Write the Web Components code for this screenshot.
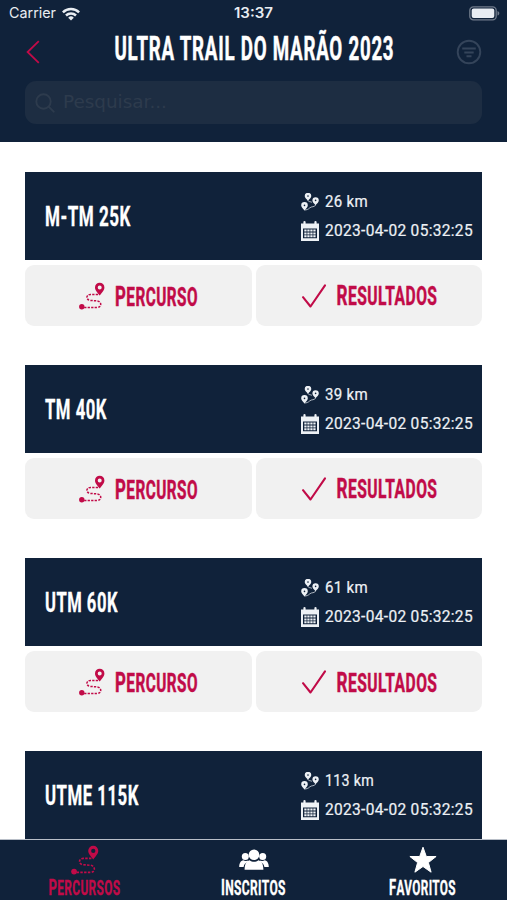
<!DOCTYPE html>
<html lang="pt">
<head>
<meta charset="utf-8">
<meta name="viewport" content="width=device-width, initial-scale=1">
<title>Ultra Trail do Marão 2023</title>
<style>
	html, body {
		margin: 0;
		height: 100%;
		overflow: hidden;
		background: #fff;
	}
	body {
		--navy: #10223a;
		--red: #c10b48;
		font-family: Roboto, "Liberation Sans", sans-serif;
		color: #fff;
	}
</style>
</head>
<body>
<race-app></race-app>
<script>
const ICONS = {
	route: `<svg viewBox="0 0 26 28"><path fill="currentColor" fill-rule="evenodd" d="M20.700 13.600C19 10.900 16 8.600 16 5.400a4.700 4.700 0 0 1 9.400 0c0 3.200-3 5.500-4.700 8.200zM20.700 3.500a2 2 0 1 0 0 4 2 2 0 0 0 0-4z"/><path fill="none" stroke="currentColor" stroke-width="1.500" stroke-dasharray="2.300 1.200" d="M19 12.500h-7.500c-4.800 0-4.800 5.600 0 5.900l6.500.5c5 .5 5 6.600 0 6.600H4"/><circle cx="2.800" cy="24.800" r="2.700" fill="currentColor"/></svg>`,
	check: `<svg viewBox="0 0 26 26"><path fill="none" stroke="currentColor" stroke-width="2.100" stroke-linecap="round" stroke-linejoin="round" d="M2 14.200l7.500 9.300L24 2.300"/></svg>`,
	pins: `<svg viewBox="0 0 18 18"><g fill="currentColor" fill-rule="evenodd"><path d="M7 8C5.700 6 3.700 5 3.700 3.100a3.300 3.300 0 0 1 6.600 0C10.300 5 8.300 6 7 8zM7 2.300a.8.8 0 1 0 0 1.600.8.800 0 0 0 0-1.600z"/><path d="M14.600 12.300c-1.300-2-3.200-3-3.200-4.900a3.200 3.200 0 0 1 6.400 0c0 1.900-1.900 2.900-3.200 4.900zM14.600 6.600a.8.800 0 1 0 0 1.600.8.800 0 0 0 0-1.600z"/><path d="M3.500 17.400C2.200 15.400.2 14.400.2 12.400a3.300 3.300 0 0 1 6.600 0c0 2-2 3-3.300 5zM3.500 11.600a.8.800 0 1 0 0 1.600.8.800 0 0 0 0-1.600z"/></g><path fill="none" stroke="currentColor" stroke-width="1" opacity=".7" d="M7 7.500c.4 1.500 2.700 1 3.900 1.800M14.600 12c-1 2.500-4 1-6 3-1.300 1.300-3 2-5.100 2"/></svg>`,
	calendar: `<svg viewBox="0 0 18 20"><path fill="currentColor" fill-rule="evenodd" d="M0 2.500h2.400V1Q2.400 0 3.500 0t1.100 1v1.500h8.800V1q0-1 1.100-1t1.100 1v1.500H18V20H0zM2 7.500v9.700h14V7.500z"/><path fill="currentColor" d="M3.300 8.500h2.300v2H3.300zm3 0h2.300v2H6.300zm3 0h2.300v2H9.300zm3 0h2.300v2h-2.300zm-9 2.900h2.300v2H3.300zm3 0h2.300v2H6.300zm3 0h2.300v2H9.300zm3 0h2.300v2h-2.300zm-9 2.900h2.300v2H3.300zm3 0h2.300v2H6.300zm3 0h2.300v2H9.300zm3 0h2.300v2h-2.300z"/></svg>`,
	people: `<svg viewBox="0 0 30 22"><g fill="currentColor"><circle cx="6.300" cy="7.400" r="3.500"/><circle cx="23.700" cy="7.400" r="3.500"/><path d="M.2 18c0-3.700 1.400-6.400 4.200-6.800 1.200 1 2.700 1.100 4 .3l.9 1C6.300 14 5 15.400 4.600 18zM29.800 18c0-3.700-1.400-6.400-4.200-6.800-1.200 1-2.700 1.100-4 .3l-.9 1c3 1.500 4.300 2.900 4.700 5.500z"/><circle cx="15" cy="5.700" r="5.300"/><path d="M5.600 20.800c0-5.300 1.600-8.800 5-9.600 2.700 2 6.100 2 8.800 0 3.400.8 5 4.300 5 9.600z"/></g></svg>`,
	star: `<svg viewBox="0 0 28 28"><path fill="currentColor" stroke="currentColor" stroke-linejoin="round" d="M14 1.200l3.300 9.300h9.800l-7.700 6.100 2.700 9.600L14 20.500l-8.100 5.700 2.700-9.600L.9 10.500h9.800z"/></svg>`,
	back: `<svg viewBox="0 0 14 24"><path fill="none" stroke="currentColor" stroke-width="1.800" d="M12.800 1.200L1.600 12l11.200 10.800"/></svg>`,
	filter: `<svg viewBox="0 0 26 26"><g fill="none" stroke="currentColor" stroke-width="1.900"><circle cx="13" cy="13" r="11.300"/><path d="M6.200 9.500h13.600M8.300 13.500h9.400M10.500 17.300h5"/></g></svg>`,
	search: `<svg viewBox="0 0 20 20"><g fill="none" stroke="currentColor" stroke-width="1.900" stroke-linecap="round"><circle cx="8.500" cy="8.500" r="7.200"/><path d="M13.700 13.700l5 5"/></g></svg>`,
	wifi: `<svg viewBox="0 0 18 14"><g fill="none" stroke="currentColor" stroke-width="2.500"><path d="M.9 5.300a11.600 11.600 0 0 1 16.200 0M4 8.500a7.200 7.200 0 0 1 10 0"/></g><path fill="currentColor" d="M9 13.600l-2.800-2.900a4 4 0 0 1 5.600 0z"/></svg>`,
	battery: `<svg viewBox="0 0 31 15"><rect x=".8" y=".8" width="26.400" height="13" rx="3.600" fill="none" stroke="#707b8b" stroke-width="1.300"/><rect x="2.700" y="2.600" width="22.600" height="9.400" rx="2" fill="currentColor"/><path fill="#707b8b" d="M28.500 5c2.400.8 2.400 3.800 0 4.600z"/></svg>`
};

// <app-icon name width height>
class AppIcon extends HTMLElement {
	constructor() {
		super();
		this.attachShadow({mode: 'open'});
	}

	connectedCallback() {
		this.shadowRoot.innerHTML = `
			<style>
				:host {
					display: block;
					flex: none;
					width: ${this.getAttribute('width')}px;
					height: ${this.getAttribute('height')}px;
				}
				svg { display: block; width: 100%; height: 100%; }
			</style>
			${ICONS[this.getAttribute('name')]}`;
	}
}
customElements.define('app-icon', AppIcon);

// <fit-text width size>: one line of text, as tall as its size and as wide
// as its width. With the "caps" attribute it is set in small capitals.
class FitText extends HTMLElement {
	constructor() {
		super();
		this.attachShadow({mode: 'open'});
	}

	connectedCallback() {
		const width = this.getAttribute('width');
		const size = this.getAttribute('size');
		this.shadowRoot.innerHTML = `
			<style>
				:host {
					display: flex;
					align-items: flex-start;
					flex: none;
					width: ${width}px;
					height: ${size}px;
					white-space: nowrap;
				}
				span {
					display: block;
					flex: none;
					font-size: 10px;
					line-height: 1;
					letter-spacing: var(--spacing, 0);
					-webkit-text-stroke: var(--stroke, 0) currentColor;
				}
				:host([caps]) span { text-transform: uppercase; }
				:host([caps]) span::first-letter { font-size: 1.1em; line-height: 1; }
				i { display: inline-block; }
			</style>
			<span></span>`;
		const span = this.shadowRoot.querySelector('span');
		span.textContent = this.getAttribute('text');
		// The font size gives the width, the scale gives the height
		const natural = span.getBoundingClientRect().width;
		if (!natural) {
			return;
		}
		const fontSize = 10 * width / natural;
		span.style.fontSize = fontSize + 'px';
		// An empty inline-block sits on the baseline: scale from there
		const probe = document.createElement('i');
		span.append(probe);
		const baseline = probe.getBoundingClientRect().bottom - span.getBoundingClientRect().top;
		probe.remove();
		span.style.transformOrigin = `0 ${baseline}px`;
		span.style.transform = `translateY(${size * 0.86 - baseline}px) scaleY(${size / fontSize})`;
	}
}
customElements.define('fit-text', FitText);

class StatusBar extends HTMLElement {
	constructor() {
		super();
		this.attachShadow({mode: 'open'}).innerHTML = `
			<style>
				:host {
					display: grid;
					grid-template-columns: 1fr auto 1fr;
					align-items: center;
					height: 27px;
					padding: 0 7px 0 9px;
					font-family: Inter, sans-serif;
					color: #e9edf2;
				}
				.left { display: flex; align-items: center; gap: 6px; }
				.time { font-weight: 600; margin-right: 2px; }
				.battery { justify-self: end; }
			</style>
			<div class="left"><fit-text size="14.5" width="47" text="Carrier"></fit-text><app-icon name="wifi" width="18" height="14"></app-icon></div>
			<fit-text class="time" size="14.5" width="39" text="13:37"></fit-text>
			<app-icon class="battery" name="battery" width="31" height="15"></app-icon>`;
	}
}
customElements.define('status-bar', StatusBar);

class PageHeader extends HTMLElement {
	constructor() {
		super();
		this.attachShadow({mode: 'open'}).innerHTML = `
			<style>
				:host {
					display: block;
					flex: none;
					box-sizing: border-box;
					height: 142px;
					background: var(--navy);
				}
				.bar {
					display: flex;
					align-items: center;
					justify-content: space-between;
					height: 50px;
					padding: 0 25px 0 26px;
				}
				.back { color: var(--red); }
				.filter { color: #34445a; }
				h1 {
					margin: 0 0 7px 13px;
					font-weight: 700;
					--spacing: .04em;
					--stroke: .3px;
				}
				.search {
					display: flex;
					align-items: center;
					gap: 8px;
					margin: 4px 25px 0;
					padding: 0 10px;
					height: 43px;
					border-radius: 11px;
					background: #1d2d42;
					color: #2d3b4d;
					font-family: "DejaVu Sans", sans-serif;
				}
				.search fit-text { margin-bottom: 2px; }
			</style>
			<status-bar></status-bar>
			<div class="bar">
				<app-icon class="back" name="back" width="14" height="24"></app-icon>
				<h1><fit-text size="33" width="280" text="ULTRA TRAIL DO MARÃO 2023"></fit-text></h1>
				<app-icon class="filter" name="filter" width="26" height="26"></app-icon>
			</div>
			<div class="search">
				<app-icon name="search" width="20" height="20"></app-icon>
				<fit-text size="18" width="104" text="Pesquisar..."></fit-text>
			</div>`;
	}
}
customElements.define('page-header', PageHeader);

// A light button with an icon in its slot
class CardButton extends HTMLElement {
	constructor() {
		super();
		this.attachShadow({mode: 'open'});
	}

	connectedCallback() {
		this.shadowRoot.innerHTML = `
			<style>
				:host {
					display: flex;
					align-items: center;
					justify-content: center;
					gap: 10px;
					height: 61px;
					border-radius: 9px;
					background: #f1f1f1;
					color: var(--red);
					font-weight: 700;
					--spacing: .03em;
					--stroke: .3px;
				}
				fit-text { margin-top: 1px; }
			</style>
			<slot></slot>
			<fit-text caps size="25" width="${this.getAttribute('width')}" text="${this.getAttribute('label')}"></fit-text>`;
	}
}
customElements.define('card-button', CardButton);

// Race header; the buttons below it are passed in by slot
class RaceCard extends HTMLElement {
	constructor() {
		super();
		this.attachShadow({mode: 'open'});
	}

	connectedCallback() {
		const attr = (name) => this.getAttribute(name);
		this.shadowRoot.innerHTML = `
			<style>
				:host { display: block; flex: none; }
				.top {
					display: flex;
					align-items: center;
					justify-content: space-between;
					height: 88px;
					padding: 0 9px 0 20px;
					background: var(--navy);
				}
				h2 {
					margin: 0;
					font-weight: 700;
					--spacing: .03em;
					--stroke: .2px;
				}
				.info {
					display: grid;
					width: 172px;
					row-gap: 5px;
					color: #edf1f5;
					--spacing: .02em;
					--stroke: .2px;
				}
				.info div { display: flex; align-items: center; gap: 6px; height: 24px; }
				.info fit-text { margin-bottom: 2px; }
				.buttons {
					display: grid;
					grid-template-columns: 227px 226px;
					justify-content: space-between;
					margin-top: 5px;
				}
			</style>
			<div class="top">
				<h2><fit-text size="28" width="${attr('name-width')}" text="${attr('name')}"></fit-text></h2>
				<div class="info">
					<div><app-icon name="pins" width="18" height="18"></app-icon><fit-text size="16" width="${attr('km-width')}" text="${attr('km')} km"></fit-text></div>
					<div><app-icon name="calendar" width="18" height="20"></app-icon><fit-text size="16" width="148" text="${attr('date')}"></fit-text></div>
				</div>
			</div>
			<div class="buttons"><slot></slot></div>`;
	}
}
customElements.define('race-card', RaceCard);

class TabBar extends HTMLElement {
	constructor() {
		super();
		this.attachShadow({mode: 'open'}).innerHTML = `
			<style>
				:host {
					display: grid;
					flex: none;
					grid-template-columns: repeat(3, 1fr);
					box-sizing: border-box;
					height: 61px;
					border-top: 1px solid #b9bfc8;
					background: var(--navy);
					font-weight: 700;
					--spacing: .03em;
					--stroke: .2px;
				}
				.tab {
					display: flex;
					flex-direction: column;
					align-items: center;
				}
				.active { color: var(--red); }
				.icon {
					display: flex;
					align-items: center;
					height: 37px;
					margin-bottom: 1px;
					padding-top: 3px;
					box-sizing: border-box;
				}
			</style>
			<div class="tab active">
				<div class="icon"><app-icon name="route" width="28" height="30"></app-icon></div>
				<fit-text caps size="19.5" width="72" text="Percursos"></fit-text>
			</div>
			<div class="tab">
				<div class="icon"><app-icon name="people" width="30" height="22"></app-icon></div>
				<fit-text caps size="19.5" width="65" text="Inscritos"></fit-text>
			</div>
			<div class="tab">
				<div class="icon"><app-icon name="star" width="28" height="28"></app-icon></div>
				<fit-text caps size="19.5" width="67" text="Favoritos"></fit-text>
			</div>`;
	}
}
customElements.define('tab-bar', TabBar);

const BUTTONS = `
	<card-button label="Percurso" width="83"><app-icon name="route" width="26" height="28"></app-icon></card-button>
	<card-button label="Resultados" width="101"><app-icon name="check" width="26" height="26"></app-icon></card-button>`;

class RaceApp extends HTMLElement {
	constructor() {
		super();
		this.attachShadow({mode: 'open'}).innerHTML = `
			<style>
				:host {
					display: flex;
					flex-direction: column;
					height: 900px;
				}
				main {
					display: flex;
					flex-direction: column;
					flex: 1;
					min-height: 0;
					overflow: hidden;
					gap: 39px;
					padding: 30px 25px 0;
				}
			</style>
			<page-header></page-header>
			<main>
				<race-card name="M-TM 25K" name-width="86" km="26" km-width="43" date="2023-04-02 05:32:25">${BUTTONS}</race-card>
				<race-card name="TM 40K" name-width="62" km="39" km-width="43" date="2023-04-02 05:32:25">${BUTTONS}</race-card>
				<race-card name="UTM 60K" name-width="73" km="61" km-width="43" date="2023-04-02 05:32:25">${BUTTONS}</race-card>
				<race-card name="UTME 115K" name-width="94" km="113" km-width="49" date="2023-04-02 05:32:25"></race-card>
			</main>
			<tab-bar></tab-bar>`;
	}
}
customElements.define('race-app', RaceApp);
</script>
</body>
</html>
